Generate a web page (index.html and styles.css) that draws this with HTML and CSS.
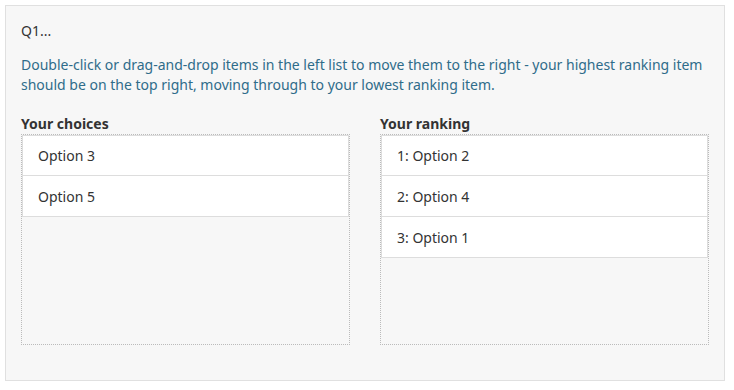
FILE: index.html
```html
<!DOCTYPE html>
<html>
<head>
<meta charset="utf-8">
<link rel="stylesheet" href="styles.css">
</head>
<body>
<div class="que">
  <div class="qtext">Q1...</div>
  <div class="instructions">Double-click or drag-and-drop items in the left list to move them to the right - your highest ranking item should be on the top right, moving through to your lowest ranking item.</div>
  <div class="lists">
    <div class="col">
      <div class="col-title">Your choices</div>
      <ul class="sortlist">
        <li class="item">Option 3</li>
        <li class="item">Option 5</li>
      </ul>
    </div>
    <div class="col">
      <div class="col-title">Your ranking</div>
      <ul class="sortlist">
        <li class="item">1: Option 2</li>
        <li class="item">2: Option 4</li>
        <li class="item">3: Option 1</li>
      </ul>
    </div>
  </div>
</div>
</body>
</html>
```

FILE: styles.css
```css
html, body {
  margin: 0;
  padding: 0;
  background: #ffffff;
}
body {
  font-family: "Noto Sans", "Open Sans", sans-serif;
  font-size: 14px;
  line-height: 20px;
  color: #333333;
}
.que {
  margin: 5px 9px 0 5px;
  height: 376px;
  box-sizing: border-box;
  border: 1px solid #e0e0e0;
  background: #f7f7f7;
  padding: 15px 15px 0 15px;
}
.qtext {
  color: #333333;
}
.instructions {
  margin-top: 14px;
  color: #2f6c8a;
}
.lists {
  margin-top: 19px;
  display: flex;
  gap: 30px;
}
.col {
  flex: 1;
  display: flex;
  flex-direction: column;
}
.col-title {
  font-weight: bold;
  color: #333333;
}
.sortlist {
  list-style: none;
  margin: 0;
  padding: 0;
  height: 211px;
  box-sizing: border-box;
  border: 1px dotted #bbbbbb;
}
.item {
  background: #ffffff;
  border: 1px solid #dddddd;
  border-top: 0;
  height: 41px;
  box-sizing: border-box;
  padding: 1px 15px 0 15px;
  display: flex;
  align-items: center;
  color: #333333;
}
.item:first-child {
  border-top: 1px solid #dddddd;
  padding-top: 0;
}
```
